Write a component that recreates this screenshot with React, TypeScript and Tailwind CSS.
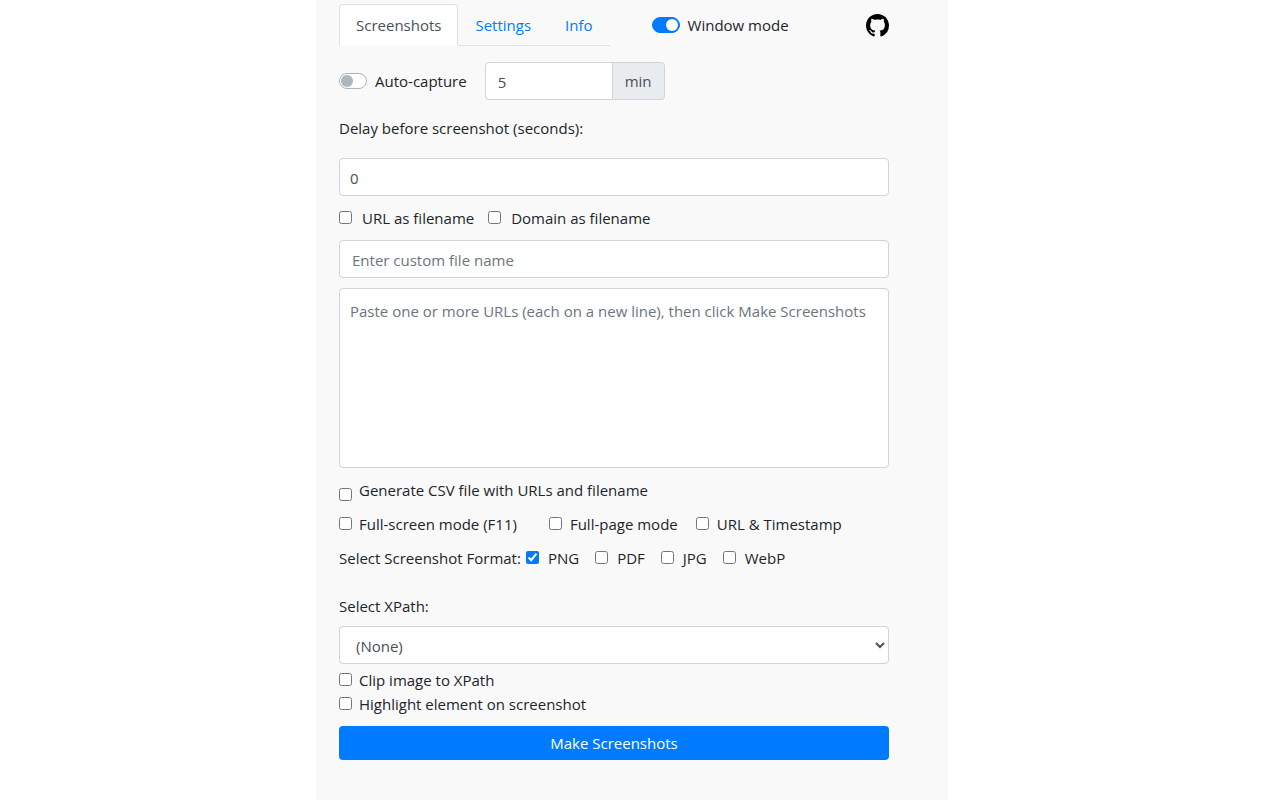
import { useState, type InputHTMLAttributes } from "react";

type CheckProps = InputHTMLAttributes<HTMLInputElement> & {
  id: string;
  label: string;
  gap?: string;
};

function Check({ id, label, gap = "gap-[7px]", ...rest }: CheckProps) {
  return (
    <div className={`flex items-center ${gap}`}>
      <input id={id} type="checkbox" className="size-[13px] mb-0.5 accent-[#007bff]" {...rest} />
      <label htmlFor={id}>{label}</label>
    </div>
  );
}

function Switch({ id, label, ...rest }: CheckProps) {
  return (
    <div className="flex items-center gap-2">
      <input
        id={id}
        type="checkbox"
        role="switch"
        className="flex items-center appearance-none w-7 h-4 px-px rounded-full border border-[#adb5bd] bg-white before:size-3 before:rounded-full before:bg-[#adb5bd] checked:justify-end checked:border-[#007bff] checked:bg-[#007bff] checked:before:bg-white"
        {...rest}
      />
      <label htmlFor={id}>{label}</label>
    </div>
  );
}

const field = "block w-full rounded border border-[#ced4da] bg-white text-[#495057] placeholder:text-[#6c757d]";
const tab = "-mb-px px-4 py-2 rounded-t border";
const formats = ["PNG", "PDF", "JPG", "WebP"];

export default function App() {
  const [format, setFormat] = useState("PNG");

  return (
    <div className="min-h-screen flex justify-center bg-white pr-4 font-['Open_Sans',sans-serif] text-[15px] leading-6 text-[#212529]">
      <main className="w-full max-w-[632px] min-h-screen bg-[#f9f9f9] pt-1 pb-10 pl-[23px] pr-[59px]">
        {/* Tabs and window switch */}
        <header className="flex items-center">
          <nav className="flex border-b border-[#dee2e6]">
            <a href="#screenshots" className={`${tab} border-[#dee2e6] border-b-white bg-white text-[#495057]`}>
              Screenshots
            </a>
            <a href="#settings" className={`${tab} border-transparent text-[#007bff]`}>Settings</a>
            <a href="#info" className={`${tab} border-transparent text-[#007bff]`}>Info</a>
          </nav>
          <div className="ml-[42px]">
            <Switch id="window-mode" label="Window mode" defaultChecked />
          </div>
          <a href="#github" aria-label="GitHub" className="ml-auto text-black">
            <svg viewBox="0 0 16 16" className="size-[23px]" fill="currentColor">
              <path d="M8 0C3.58 0 0 3.58 0 8c0 3.54 2.29 6.53 5.47 7.59.4.07.55-.17.55-.38 0-.19-.01-.82-.01-1.49-2.01.37-2.53-.49-2.69-.94-.09-.23-.48-.94-.82-1.13-.28-.15-.68-.52-.01-.53.63-.01 1.08.58 1.23.82.72 1.21 1.87.87 2.33.66.07-.52.28-.87.51-1.07-1.78-.2-3.64-.89-3.64-3.95 0-.87.31-1.59.82-2.15-.08-.2-.36-1.02.08-2.12 0 0 .67-.21 2.2.82.64-.18 1.32-.27 2-.27s1.36.09 2 .27c1.53-1.04 2.2-.82 2.2-.82.44 1.1.16 1.92.08 2.12.51.56.82 1.27.82 2.15 0 3.07-1.87 3.75-3.65 3.95.29.25.54.73.54 1.48 0 1.07-.01 1.93-.01 2.2 0 .21.15.46.55.38A8.01 8.01 0 0 0 16 8c0-4.42-3.58-8-8-8Z" />
            </svg>
          </a>
        </header>

        {/* Auto-capture */}
        <div className="mt-4 flex items-center gap-[18px]">
          <Switch id="auto-capture" label="Auto-capture" />
          <div className="flex h-[38px]">
            <input
              type="text"
              aria-label="Auto-capture interval"
              aria-describedby="interval-unit"
              defaultValue="5"
              className="w-32 px-3 pt-0.5 rounded-l border border-[#ced4da] bg-white text-[#495057]"
            />
            <span id="interval-unit" className="-ml-px flex items-center px-3 rounded-r border border-[#ced4da] bg-[#e9ecef] text-[#495057]">
              min
            </span>
          </div>
        </div>

        <label htmlFor="delay" className="mt-4 mb-[18px] block">Delay before screenshot (seconds):</label>
        <input id="delay" type="text" defaultValue="0" className={`${field} h-[38px] px-2.5 pt-0.5`} />

        {/* File name */}
        <div className="my-2.5 flex gap-3.5">
          <Check id="url-name" label="URL as filename" gap="gap-2.5" />
          <Check id="domain-name" label="Domain as filename" gap="gap-2.5" />
        </div>
        <input type="text" aria-label="Custom file name" placeholder="Enter custom file name" className={`${field} h-[38px] px-3 pt-0.5`} />
        <textarea
          aria-label="URLs"
          placeholder="Paste one or more URLs (each on a new line), then click Make Screenshots"
          className={`${field} mt-2.5 h-[180px] px-2.5 py-2.5 resize-none`}
        />

        {/* Capture options */}
        <div className="mt-2.5 flex items-start gap-[7px]">
          <input id="csv" type="checkbox" className="mt-2.5 size-[13px] accent-[#007bff]" />
          <label htmlFor="csv">Generate CSV file with URLs and filename</label>
        </div>
        <div className="mt-2.5 flex">
          <Check id="full-screen" label="Full-screen mode (F11)" />
          <div className="ml-8 flex gap-[18px]">
            <Check id="full-page" label="Full-page mode" gap="gap-2" />
            <Check id="timestamp" label="URL & Timestamp" gap="gap-2" />
          </div>
        </div>
        <div role="group" aria-labelledby="format-label" className="mt-2.5 flex gap-[5px]">
          <span id="format-label">Select Screenshot Format:</span>
          <div className="flex gap-4">
            {formats.map((name) => (
              <Check
                key={name}
                id={`format-${name}`}
                label={name}
                gap="gap-[9px]"
                checked={format === name}
                onChange={() => setFormat(name)}
              />
            ))}
          </div>
        </div>

        {/* XPath */}
        <label htmlFor="xpath" className="mt-6 mb-2 block">Select XPath:</label>
        <select id="xpath" className={`${field} h-[38px] px-3 pt-0.5`}>
          <option>(None)</option>
        </select>
        <div className="mt-1">
          <Check id="clip" label="Clip image to XPath" />
          <Check id="highlight" label="Highlight element on screenshot" />
        </div>

        <button type="button" className="mt-2.5 w-full h-[34px] rounded bg-[#007bff] text-white">
          Make Screenshots
        </button>
      </main>
    </div>
  );
}
